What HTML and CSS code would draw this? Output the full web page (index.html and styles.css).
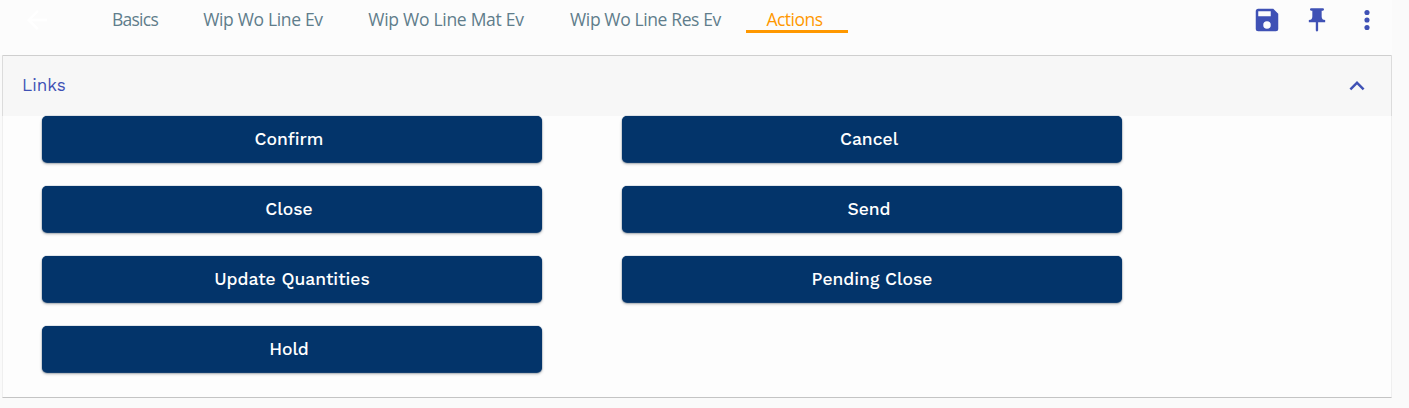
FILE: index.html
```html
<!DOCTYPE html>
<html lang="en">
<head>
<meta charset="utf-8">
<title>Actions</title>
<link rel="stylesheet" href="styles.css">
</head>
<body>
<header class="toolbar">
  <svg class="back" viewBox="0 0 24 24"><path d="M20 11H7.83l5.59-5.59L12 4l-8 8 8 8 1.41-1.41L7.83 13H20z"/></svg>
  <nav class="tabs">
    <a class="tab basics">Basics</a>
    <a class="tab line">Wip Wo Line Ev</a>
    <a class="tab mat">Wip Wo Line Mat Ev</a>
    <a class="tab res">Wip Wo Line Res Ev</a>
    <a class="tab active">Actions</a>
  </nav>
  <div class="tools">
    <svg class="tool save" viewBox="0 0 24 24"><path d="M17 3H5a2 2 0 0 0-2 2v14a2 2 0 0 0 2 2h14a2 2 0 0 0 2-2V7zm-5 16a3 3 0 1 1 0-6 3 3 0 0 1 0 6zm3-10H5V5h10z"/></svg>
    <svg class="tool" viewBox="0 0 24 24"><path d="M16 9V4h1a1 1 0 0 0 0-2H7a1 1 0 0 0 0 2h1v5a3 3 0 0 1-3 3v2h5.970v7l1 1 1-1v-7H19v-2a3 3 0 0 1-3-3z"/></svg>
    <svg class="tool" viewBox="0 0 24 24"><circle cx="12" cy="5.600" r="2.200"/><circle cx="12" cy="12" r="2.200"/><circle cx="12" cy="18.400" r="2.200"/></svg>
  </div>
</header>
<main class="panel">
  <div class="panel-head">
    <span class="panel-title">Links</span>
    <svg class="chevron" viewBox="0 0 24 24"><path d="M12 8l-6 6 1.410 1.410L12 10.830l4.590 4.580L18 14z"/></svg>
  </div>
  <div class="actions">
    <button class="action">Confirm</button>
    <button class="action">Cancel</button>
    <button class="action">Close</button>
    <button class="action">Send</button>
    <button class="action wide">Update Quantities</button>
    <button class="action wide">Pending Close</button>
    <button class="action">Hold</button>
  </div>
</main>
</body>
</html>
```
FILE: styles.css
```css
* { box-sizing: border-box; }
body {
  margin: 0;
  height: 408px;
  overflow: hidden;
  background: #fafafa;
  font-family: "Work Sans", Inter, sans-serif;
}
.toolbar {
  display: flex;
  align-items: flex-start;
  width: 1392px;
  height: 55px;
  background: #fcfcfc;
}
.back { width: 30px; height: 30px; margin: 5px 0 0 22px; fill: #fff; }
.tabs { display: flex; margin-left: 37px; }
.tab {
  height: 33px;
  text-align: center;
  white-space: nowrap;
  font: 17.5px/38px "Segoe UI", "Open Sans", sans-serif;
  color: #607d8b;
}
.basics { width: 92px; letter-spacing: -0.75px; }
.line { width: 164px; letter-spacing: -0.33px; }
.mat { width: 202px; letter-spacing: -0.28px; }
.res { width: 197px; letter-spacing: -0.38px; }
.active {
  width: 102px;
  margin-left: 2px;
  padding-right: 5px;
  border-bottom: 3px solid #ff9800;
  letter-spacing: -0.5px;
  color: #ff9800;
}
.tools { display: flex; gap: 22px; margin: 6px 11px 0 auto; }
.tool { width: 28px; height: 28px; fill: #3f51b5; }
.save { width: 30px; height: 30px; margin: -1px -1px 0; }
.panel {
  width: 1390px;
  height: 343px;
  margin-left: 2px;
  border: 1px solid #efefef;
  border-top-color: #cfcfcf;
  border-bottom: 1px solid #c4c4c4;
  background: #fdfdfd;
}
.panel-head {
  display: flex;
  align-items: center;
  justify-content: space-between;
  height: 60px;
  margin: 0 -1px;
  padding: 0 19px;
  border: solid #dcdcdc;
  border-width: 0 1px;
  background: #f7f7f7;
}
.panel-title {
  margin-top: -2px;
  font: 17px/24px "Work Sans", Inter, sans-serif;
  color: #3f51b5;
}
.chevron { width: 30px; height: 30px; fill: #3f51b5; }
.actions {
  display: grid;
  grid-template-columns: 500px 500px;
  gap: 24px 80px;
  padding-left: 39px;
}
.action {
  height: 46px;
  padding: 0 6px 0 0;
  border: 0;
  border-radius: 5px;
  background: #03346a;
  box-shadow: 0 0.5px 1px #03346a, 0 2px 3px rgba(0, 0, 0, 0.3);
  color: #fff;
  font: 500 17.5px/46px "Work Sans", Inter, sans-serif;
}
.wide { padding: 0; }
```
